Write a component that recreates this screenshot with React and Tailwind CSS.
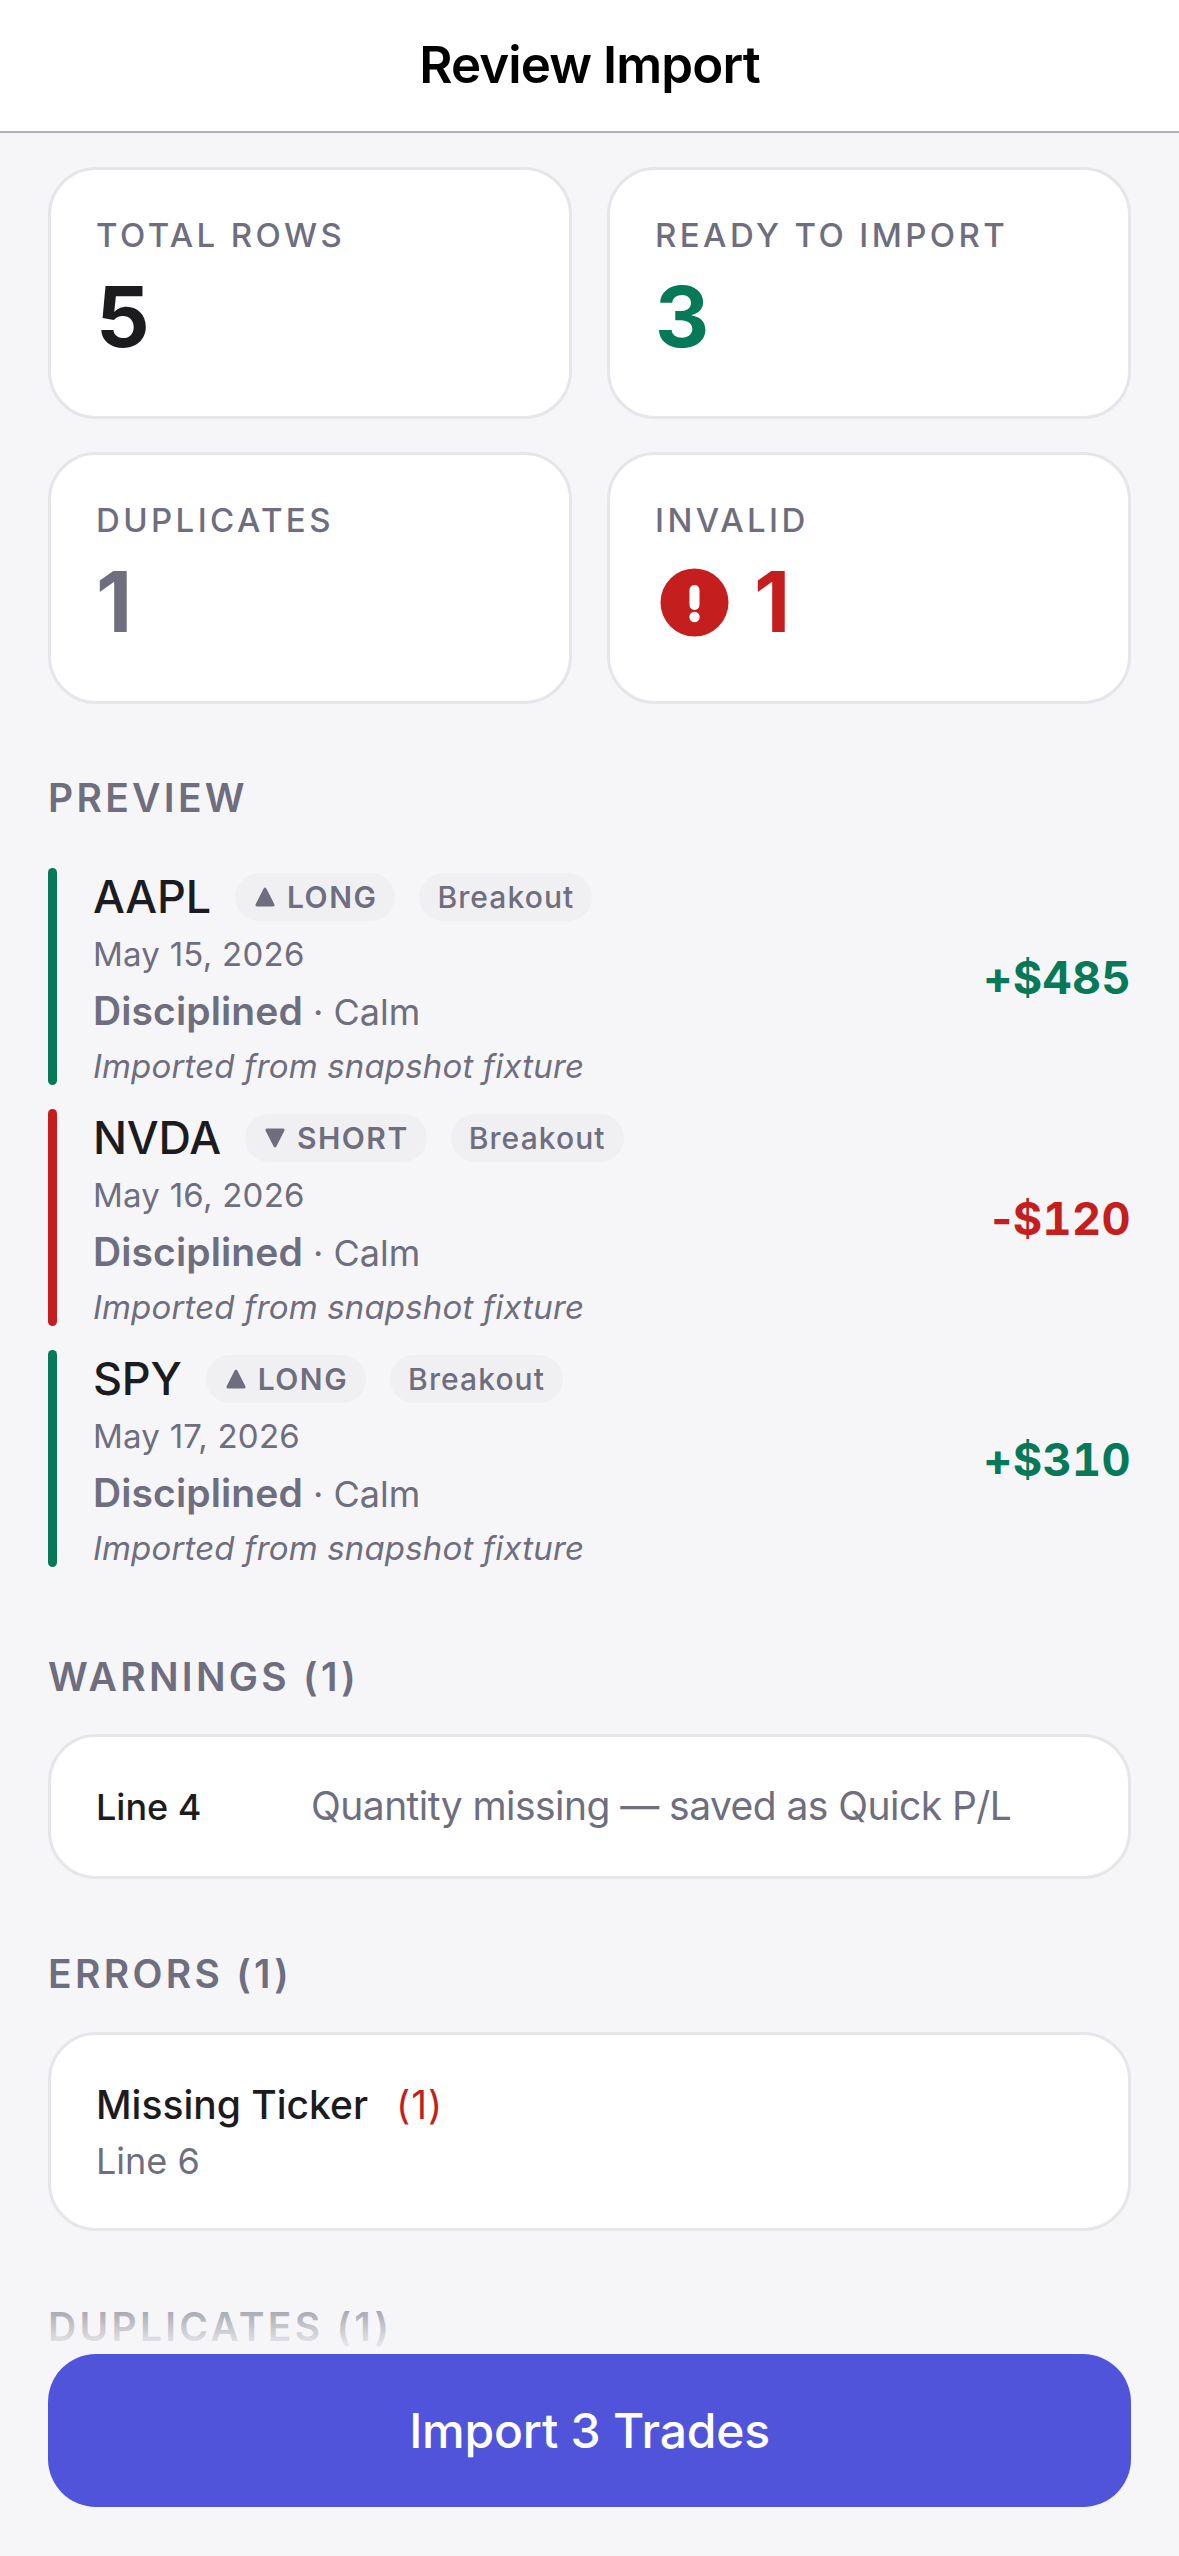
import React from "react";

const font = { fontFamily: '"Inter", "Liberation Sans", sans-serif' };

function Stat({ label, value, color, icon }) {
  return (
    <div className="h-[252px] rounded-[48px] border-[3px] border-[#e5e5ea] bg-white pl-[45px] pt-[45px]">
      <div className="text-[33px] leading-[40px] font-medium tracking-[3.4px] text-[#6e6e7e]">{label}</div>
      <div className={`mt-[12px] flex items-center gap-[25px] text-[84px] leading-[100px] font-bold ${color}`}>
        {icon}
        <span>{value}</span>
      </div>
    </div>
  );
}

function Alert() {
  return (
    <svg width="69" height="69" viewBox="0 0 69 69" className="ml-[5px]">
      <circle cx="34.5" cy="34.5" r="34" fill="#c41e1e" />
      <rect x="29.5" y="17" width="10" height="25" rx="5" fill="#fff" />
      <circle cx="34.5" cy="49" r="5.2" fill="#fff" />
    </svg>
  );
}

function Heading({ children, className = "" }) {
  return (
    <div className={`text-[39px] leading-[44px] font-semibold tracking-[3.3px] text-[#6e6e7e] ${className}`}>{children}</div>
  );
}

function Pill({ children }) {
  return (
    <span className="flex h-[48px] items-center gap-[10px] rounded-full bg-[#f0f0f3] px-[18px] text-[30px] font-medium tracking-[1.1px] text-[#6e6e7e]">
      {children}
    </span>
  );
}

function Row({ ticker, dir, date, amount, up }) {
  const bar = up ? "bg-[#067a58]" : "bg-[#c41e1e]";
  const text = up ? "text-[#067a58]" : "text-[#c41e1e]";
  return (
    <div className="flex h-[217px] items-center">
      <div className={`h-full w-[9px] rounded-full ${bar}`} />
      <div className="ml-[36px] flex-1 pt-[6px]">
        <div className="flex h-[52px] items-center">
          <span className="text-[45px] leading-[52px] font-medium tracking-[-0.2px] text-[#1c1c1e]">{ticker}</span>
          <span className="ml-[24px]">
            <Pill>
              <svg width="24" height="24" viewBox="0 0 24 24" className={up ? "" : "rotate-180"}>
                <path d="M12 2.5 Q13 2.5 13.6 4 L21.5 19.5 Q22 21.5 20 21.5 L4 21.5 Q2 21.5 2.5 19.5 L10.4 4 Q11 2.5 12 2.5Z" fill="#6e6e7e" />
              </svg>
              <span className="font-semibold tracking-[1.5px]">{dir}</span>
            </Pill>
          </span>
          <span className="ml-[24px]">
            <Pill>Breakout</Pill>
          </span>
        </div>
        <div className="mt-[9px] text-[33px] leading-[44px] tracking-[0.25px] text-[#6e6e7e]">{date}</div>
        <div className="mt-[11px] text-[36px] leading-[48px] text-[#6e6e7e]">
          <span className="text-[39px] font-semibold tracking-[0.1px]">Disciplined</span> · Calm
        </div>
        <div className="mt-[8px] text-[33px] leading-[44px] tracking-[0.16px] italic text-[#6e6e7e]">Imported from snapshot fixture</div>
      </div>
      <div className={`pt-[3px] text-[45px] font-bold tracking-[0.4px] tabular-nums ${text}`}>
        {up ? (
          amount
        ) : (
          <>
            <span className="normal-nums">-</span>
            {amount.slice(1)}
          </>
        )}
      </div>
    </div>
  );
}

export default function App() {
  return (
    <div style={font} className="flex h-[2556px] w-[1179px] flex-col overflow-hidden bg-[#f6f6f9]">
      <header className="flex h-[133px] shrink-0 items-center justify-center border-b-[2px] border-[#b2b2b6] bg-white">
        <h1 className="text-[51px] font-semibold tracking-[-0.9px] text-black">Review Import</h1>
      </header>

      <main className="relative min-h-0 flex-1 overflow-hidden px-[48px] pt-[34px]">
        <div className="grid grid-cols-2 gap-x-[35px] gap-y-[33px]">
          <Stat label="TOTAL ROWS" value="5" color="text-[#1c1c1e]" />
          <Stat label="READY TO IMPORT" value="3" color="text-[#067a58]" />
          <Stat label="DUPLICATES" value="1" color="text-[#6e6e7e]" />
          <Stat label="INVALID" value="1" color="text-[#c41e1e]" icon={<Alert />} />
        </div>

        <Heading className="mt-[72px]">PREVIEW</Heading>
        <div className="mt-[48px] flex flex-col gap-[24px]">
          <Row ticker="AAPL" dir="LONG" date="May 15, 2026" amount="+$485" up />
          <Row ticker="NVDA" dir="SHORT" date="May 16, 2026" amount="-$120" />
          <Row ticker="SPY" dir="LONG" date="May 17, 2026" amount="+$310" up />
        </div>

        <Heading className="mt-[88px]">WARNINGS (1)</Heading>
        <div className="mt-[35px] flex h-[145px] items-center rounded-[48px] border-[3px] border-[#e5e5ea] bg-white pl-[45px]">
          <span className="w-[215px] text-[36px] font-medium text-[#1c1c1e]">Line 4</span>
          <span className="text-[39px] tracking-[-0.55px] text-[#6e6e7e]">Quantity missing — saved as Quick P/L</span>
        </div>

        <Heading className="mt-[73px]">ERRORS (1)</Heading>
        <div className="mt-[36px] h-[199px] rounded-[48px] border-[3px] border-[#e5e5ea] bg-white pl-[45px] pt-[44px]">
          <div className="flex items-center text-[39px] leading-[52px] font-medium text-[#1c1c1e]">
            Missing Ticker
            <span className="ml-[28px] text-[39px] font-normal tracking-[1px] text-[#c41e1e]">(1)</span>
          </div>
          <div className="mt-[8px] text-[36px] leading-[44px] text-[#6e6e7e]">Line 6</div>
        </div>

        <Heading className="mt-[74px]">DUPLICATES (1)</Heading>

        <div className="absolute inset-x-0 bottom-0 h-[76px] bg-gradient-to-b from-[#f6f6f900] to-[#f6f6f9]" />
      </main>

      <footer className="shrink-0 px-[48px] pb-[49px]">
        <button className="flex h-[153px] w-full items-center justify-center rounded-[48px] bg-[#5054db] text-[48px] font-medium tracking-[-0.2px] text-white">
          Import 3 Trades
        </button>
      </footer>
    </div>
  );
}
